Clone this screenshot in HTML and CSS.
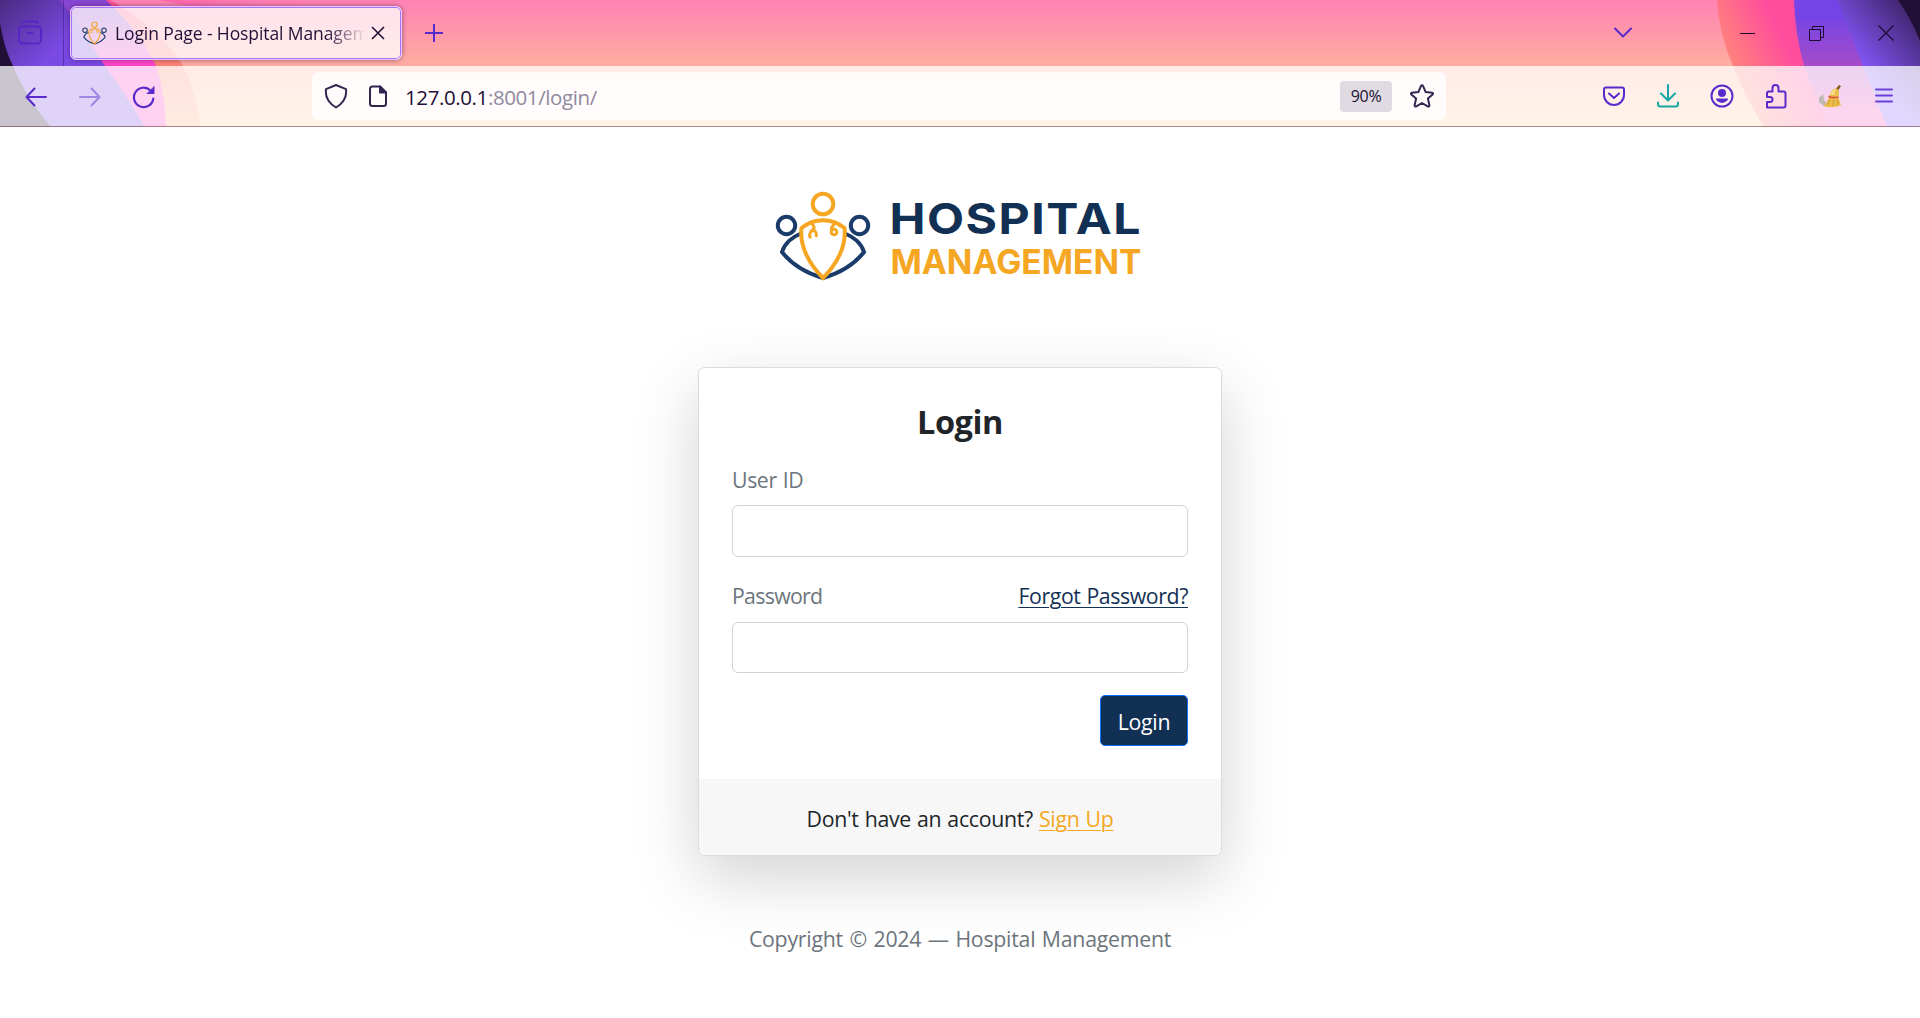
FILE: index.html
```html
<!DOCTYPE html>
<html lang="en">
<head>
<meta charset="utf-8">
<title>Login Page - Hospital Management</title>
<link rel="stylesheet" href="styles.css">
</head>
<body>
<svg width="0" height="0" class="defs" aria-hidden="true">
  <defs>
    <symbol id="mark" viewBox="0 0 96 90">
      <g fill="none" stroke-width="4">
        <g stroke="#1b3c6b">
          <circle cx="11.500" cy="34.500" r="8.700"/>
          <circle cx="84.500" cy="34.500" r="8.700"/>
          <path d="M26 42.500C17 46 9.500 53 7 61C17 74 31 82 48 87C65 82 79 74 89 61C86.500 53 79 46 70 42.500"/>
        </g>
        <g stroke="#f5a623">
          <circle cx="48" cy="13" r="10.300"/>
          <path d="M26.500 37C39 26.500 57 26.500 69.500 37C71.500 55 62 73 48 87C34 73 24.500 55 26.500 37Z"/>
          <g stroke-width="3">
            <path d="M36 31C38 34 41 37 37.500 39C34 42 33.500 46 36.500 46.500M38 39C41 40 42 43 41 46"/>
            <path d="M60 31C60 34 55 36 56.500 39"/>
            <circle cx="59" cy="41" r="2.800"/>
          </g>
        </g>
      </g>
    </symbol>
  </defs>
</svg>

<header class="browser">
  <svg class="theme" viewBox="0 0 1920 127" preserveAspectRatio="none" aria-hidden="true">
    <defs>
      <linearGradient id="peach" x1="0" y1="0" x2="0" y2="1"><stop offset="0" stop-color="#ff82b4"/><stop offset=".52" stop-color="#ffada0"/><stop offset="1" stop-color="#ffcf9c"/></linearGradient>
      <linearGradient id="lp" gradientUnits="userSpaceOnUse" x1="0" y1="0" x2="50" y2="55"><stop offset="0" stop-color="#4a2a80"/><stop offset="1" stop-color="#7b49e3"/></linearGradient>
      <linearGradient id="lm" gradientUnits="userSpaceOnUse" x1="0" y1="0" x2="0" y2="60"><stop offset="0" stop-color="#8546d2"/><stop offset=".3" stop-color="#9a48d0"/><stop offset="1" stop-color="#ff45c6"/></linearGradient>
      <linearGradient id="lo" gradientUnits="userSpaceOnUse" x1="110" y1="0" x2="320" y2="0"><stop offset="0" stop-color="#ff4aa3"/><stop offset="1" stop-color="#ff82b4" stop-opacity="0"/></linearGradient>
      <linearGradient id="lw" gradientUnits="userSpaceOnUse" x1="0" y1="0" x2="0" y2="126"><stop offset="0" stop-color="#ff4f94"/><stop offset=".5" stop-color="#ff8374"/><stop offset="1" stop-color="#ffae80"/></linearGradient>
      <linearGradient id="ro" gradientUnits="userSpaceOnUse" x1="1715" y1="50" x2="1775" y2="20"><stop offset="0" stop-color="#ff8a76"/><stop offset="1" stop-color="#ff4d9e"/></linearGradient>
      <linearGradient id="rp" gradientUnits="userSpaceOnUse" x1="0" y1="15" x2="0" y2="110"><stop offset="0" stop-color="#7544e6"/><stop offset=".5" stop-color="#a34acb"/><stop offset="1" stop-color="#f04fb8"/></linearGradient>
      <linearGradient id="rv" gradientUnits="userSpaceOnUse" x1="1862" y1="65" x2="1915" y2="20"><stop offset="0" stop-color="#8255f6"/><stop offset="1" stop-color="#432772"/></linearGradient>
    </defs>
    <rect width="1920" height="127" fill="url(#peach)"/>
    <path d="M100 0H330V6H190L160 0Z" fill="url(#lo)"/>
    <path d="M60 0H110C145 20 165 38 183 66Q196 92 201 127H60Z" fill="url(#lw)"/>
    <path d="M60 0H106Q142 34 156 66Q165 92 166 127H60Z" fill="url(#lm)"/>
    <path d="M0 0H60Q82 30 105 66Q126 94 145 127H0Z" fill="url(#lp)"/>
    <path d="M0 23Q4 48 13 66Q27 100 51 127H0Z" fill="#211036"/>
    <path d="M1717 0Q1719 34 1733 66Q1746 99 1764 127H1920V0Z" fill="url(#ro)"/>
    <path d="M1794 0Q1795 34 1804 66Q1815 98 1830 127H1920V0Z" fill="url(#rp)"/>
    <path d="M1838 0Q1850 34 1863 66Q1876 98 1887 127H1920V0Z" fill="url(#rv)"/>
    <path d="M1898 0Q1911 18 1920 41V0Z" fill="#211036"/>
  </svg>

  <div class="tabs">
    <div class="recent">
      <svg width="26" height="26" viewBox="0 0 26 26" fill="none" stroke="#5726c6" stroke-width="2" stroke-linecap="round"><path d="M5 2.500Q6 1.500 8 1.500H18Q20 1.500 21 2.500M10.500 13H15.500"/><rect x="2" y="6.500" width="22" height="17" rx="3.500"/></svg>
    </div>
    <div class="tab">
      <svg class="favicon" viewBox="0 0 96 90"><use href="#mark"/></svg>
      <span class="tab-title">Login Page - Hospital Management</span>
      <svg class="tab-close" width="14" height="14" viewBox="0 0 14 14" stroke="#211036" stroke-width="1.600"><path d="M1 1L13 13M13 1L1 13"/></svg>
    </div>
    <svg class="new-tab" width="18" height="18" viewBox="0 0 18 18" stroke="#5a2bcc" stroke-width="2"><path d="M9 0V18M0 9H18"/></svg>
    <div class="window">
      <svg width="18" height="12" viewBox="0 0 18 12" fill="none" stroke="#5a2bcc" stroke-width="2" stroke-linecap="round" stroke-linejoin="round"><path d="M1 1.500L9 9.500L17 1.500"/></svg>
      <svg width="15" height="15" viewBox="0 0 15 15" stroke="#1b0d30"><path d="M0 7.500H15"/></svg>
      <svg width="15" height="15" viewBox="0 0 15 15" fill="none" stroke="#1b0d30"><path d="M.5 3.500H11.500V14.500H.5ZM3.500 3.500V.5H14.500V11.500H11.500"/></svg>
      <svg width="16" height="16" viewBox="0 0 16 16" stroke="#1b0d30" stroke-width="1.200"><path d="M.5.5L15.500 15.500M15.500.5L.5 15.500"/></svg>
    </div>
  </div>

  <div class="toolbar">
    <div class="nav">
      <svg width="22" height="20" viewBox="0 0 22 20" fill="none" stroke="#5a2bcc" stroke-width="2" stroke-linecap="round" stroke-linejoin="round"><path d="M21 10H1.500M9.500 1.500L1.500 10L9.500 18.500"/></svg>
      <svg class="off" width="22" height="20" viewBox="0 0 22 20" fill="none" stroke="#5a2bcc" stroke-width="2" stroke-linecap="round" stroke-linejoin="round"><path d="M1 10H20.500M12.500 1.500L20.500 10L12.500 18.500"/></svg>
      <svg width="24" height="24" viewBox="0 0 24 24" fill="none" stroke="#5a2bcc" stroke-width="2.200" stroke-linecap="round"><path d="M21.300 13.500A9.700 9.700 0 1 1 18.500 5.500"/><path d="M22 2V8.500H15.500Z" fill="#5a2bcc" stroke-width="1"/></svg>
    </div>
    <div class="url">
      <svg width="24" height="26" viewBox="0 0 24 26" fill="none" stroke="#332550" stroke-width="2" stroke-linejoin="round"><path d="M12 2L22 6.200Q23.500 17.500 12 24.500Q.5 17.500 2 6.200Z"/></svg>
      <svg class="doc" width="20" height="24" viewBox="0 0 20 24" fill="none" stroke="#332550" stroke-width="2" stroke-linejoin="round"><path d="M12 2.500H4.500Q2 2.500 2 5V19.500Q2 22 4.500 22H15.500Q18 22 18 19.500V8.500Z"/><path d="M12 2.500V8.500H18Z" fill="#332550"/></svg>
      <span class="address">127.0.0.1<span class="path">:8001/login/</span></span>
      <span class="zoom">90%</span>
      <svg class="star" width="26" height="26" viewBox="0 0 26 26" fill="none" stroke="#332550" stroke-width="2" stroke-linejoin="round"><path d="M13 2.300Q13.700 2.300 14.100 3.200L16.700 9.100L23 9.700Q24.800 10.200 23.600 11.500L18.900 15.600L20.400 22.200Q20.300 24 18.700 23.400L13 20L7.300 23.400Q5.700 24 5.600 22.200L7.100 15.600L2.400 11.500Q1.200 10.200 3 9.700L9.300 9.100L11.900 3.200Q12.300 2.300 13 2.300Z"/></svg>
    </div>
    <div class="actions">
      <svg width="24" height="22" viewBox="0 0 24 22" fill="none" stroke="#5a2bcc" stroke-width="2" stroke-linecap="round" stroke-linejoin="round"><path d="M4 2.500H20Q22 2.500 22 4.500V10A10 10 0 0 1 2 10V4.500Q2 2.500 4 2.500ZM7 8.500L12 13L17 8.500"/></svg>
      <svg width="24" height="24" viewBox="0 0 24 24" fill="none" stroke="#17a5a5" stroke-width="2" stroke-linecap="round" stroke-linejoin="round"><path d="M12 1V16M5 9.500L12 16.500L19 9.500M2 18.500V20Q2 22.500 4.500 22.500H19.500Q22 22.500 22 20V18.500"/></svg>
      <svg width="24" height="24" viewBox="0 0 24 24"><circle cx="12" cy="12" r="10.500" fill="none" stroke="#5a2bcc" stroke-width="2"/><circle cx="12" cy="9" r="4" fill="#5a2bcc"/><path d="M6 14.500H18Q18.500 16 16 17.600Q14 19 12 19Q10 19 8 17.600Q5.500 16 6 14.500Z" fill="#5a2bcc"/></svg>
      <svg width="24" height="26" viewBox="0 0 24 26" fill="none" stroke="#5a2bcc" stroke-width="2" stroke-linejoin="round"><path d="M3 10.500Q3 8.500 5 8.500H8.500V5Q8.500 2 11.500 2Q14.500 2 14.500 5V8.500H19.500Q21.500 8.500 21.500 10.500V22.500Q21.500 24.500 19.500 24.500H3V19H6Q8.500 19 8.500 16.500Q8.500 14 6 14H3Z"/></svg>
      <svg width="24" height="24" viewBox="0 0 24 24"><path d="M1 14L5 10L6 16L10 21L6 22L1 18Z" fill="#bdb9b2"/><path d="M17 6L21 1L23 2L20 7Z" fill="#8a5f22"/><path d="M13 8Q15 4 18 4.500Q21 5 21 9L20.500 14L23 21Q15 25 5.500 22Q10 18 11 12Z" fill="#e9be4b"/><path d="M14 7Q16 4.500 18 5L16 11L12.500 11Z" fill="#f6dc8a"/><path d="M10.500 12.500Q15 14.500 20.500 13" stroke="#e0523f" stroke-width="1.800" fill="none"/><path d="M12 15.500L9 21.500M16 16L15 22M19.500 15.500L20 21" stroke="#c98f2b" stroke-width=".8" fill="none"/></svg>
      <svg class="menu" width="20" height="18" viewBox="0 0 20 18" stroke="#6d40d6" stroke-width="2" stroke-linecap="round"><path d="M2 2.500H18M2 8.500H18M2 14.500H18"/></svg>
    </div>
  </div>
</header>

<main class="page">
  <svg class="logo" width="370" height="92" viewBox="0 0 370 92" role="img" aria-label="Hospital Management">
    <use href="#mark" x="0" y="0" width="96" height="90"/>
    <text class="logo-top" transform="translate(114.500 42.500) scale(1.120 1)" textLength="224" lengthAdjust="spacing">HOSPITAL</text>
    <text class="logo-bottom" x="115.500" y="82.500" textLength="251" lengthAdjust="spacingAndGlyphs">MANAGEMENT</text>
  </svg>

  <section class="card">
    <form class="card-body">
      <h1 class="title">Login</h1>
      <label class="label" for="user"><span class="user-text">User ID</span></label>
      <input class="field" id="user" type="text">
      <div class="row">
        <label class="label tight" for="password">Password</label>
        <a class="forgot" href="#">Forgot Password?</a>
      </div>
      <input class="field short" id="password" type="password">
      <button class="submit" type="button">Login</button>
    </form>
    <div class="card-footer"><span>Don't have an account? <a class="signup" href="#">Sign Up</a></span></div>
  </section>

  <footer class="copyright">Copyright © 2024 — Hospital Management</footer>
</main>
</body>
</html>
```
FILE: styles.css
```css
* { box-sizing: border-box; }
body {
  margin: 0;
  height: 1018px;
  overflow: hidden;
  background: #fff;
  color: #212529;
  font-family: "Open Sans", "Noto Sans", sans-serif;
  font-size: 21.3px;
  letter-spacing: -0.3px;
  word-spacing: 0.8px;
}
svg { display: block; flex: none; }
.defs { position: absolute; }

/* Browser chrome */
.browser { position: relative; height: 127px; word-spacing: 0; }
.theme { position: absolute; inset: 0; width: 100%; height: 100%; }
.tabs { position: relative; display: flex; align-items: center; height: 66px; }
.recent {
  display: flex; align-items: center; justify-content: center;
  width: 64px; height: 66px; padding-right: 3px;
  border-right: 1px solid rgba(60, 20, 130, .5);
}
.tab {
  display: flex; align-items: center;
  width: 332px; height: 54px; margin-left: 6px; padding: 0 16px 0 11px;
  background: rgba(255, 255, 255, .76);
  border: 1px solid #e3cdf8; border-radius: 6px;
  box-shadow: 0 0 5px rgba(40, 10, 70, .5), inset 0 0 0 1px #ac70ff;
}
.favicon { width: 25px; height: 24px; }
.tab-title {
  width: 253px; margin: 0 5px 0 8px;
  overflow: hidden; white-space: nowrap;
  font-size: 17.5px; letter-spacing: -0.1px; color: #211036;
  -webkit-mask-image: linear-gradient(90deg, #000 84%, transparent);
  mask-image: linear-gradient(90deg, #000 84%, transparent);
}
.new-tab { margin-left: 23px; }
.window { display: flex; align-items: center; margin-left: auto; padding-right: 26px; }
.window svg + svg { margin-left: 54px; }
.window svg:nth-child(2) { margin-left: 108px; }

.toolbar {
  position: relative; display: flex; align-items: center;
  height: 61px; padding-right: 26px;
  background: rgba(255, 255, 255, .76);
  border-bottom: 1px solid rgba(95, 25, 40, .5);
}
.nav { display: flex; align-items: center; gap: 32px; width: 312px; padding: 1px 0 0 25px; }
.nav svg:last-child { margin-left: -1px; }
.off { opacity: .45; }
.url {
  display: flex; align-items: center;
  width: 1134px; height: 48px; padding: 0 11px 0 12px;
  background: rgba(255, 255, 255, .8); border-radius: 6px;
}
.doc { margin-left: 20px; }
.address { margin: 2px auto 0 17px; font-size: 20.5px; letter-spacing: -0.4px; color: #211036; }
.path { color: #91889f; }
.zoom {
  display: flex; align-items: center; justify-content: center;
  width: 52px; height: 31px; margin-right: 17px;
  background: #e0dbe2; border-radius: 4px;
  font-size: 16px; letter-spacing: -0.3px; color: #211036;
}
.actions { display: flex; align-items: center; gap: 30px; margin-left: auto; }
.menu { margin-left: 2px; }

/* Page */
.page { display: flex; flex-direction: column; align-items: center; }
.logo { margin: 64px 1px 0 0; }
.logo text { font-family: Inter, "Liberation Sans", sans-serif; letter-spacing: 0; word-spacing: 0; }
.logo-top { font-size: 43px; font-weight: 650; fill: #123054; }
.logo-bottom { font-size: 33.5px; font-weight: 700; fill: #f5a623; }
.card {
  width: 524px; height: 489px; margin-top: 84px;
  background: #fff; border: 1px solid #dcdddf; border-radius: 7px;
  box-shadow: 0 22px 65px rgba(0, 0, 0, .175);
  overflow: hidden;
}
.card-body { display: flex; flex-direction: column; height: 411px; padding: 31px 33px 0; }
.title { margin: 0 0 15px; text-align: center; font-size: 32.5px; line-height: 45px; font-weight: 700; letter-spacing: -0.4px; }
.label { color: #6c757d; line-height: 32px; }
.tight { letter-spacing: -0.7px; }
.user-text { display: inline-block; padding-top: 5px; line-height: 32px; letter-spacing: -0.4px; }
.field {
  width: 456px; height: 52px; margin: 9px 0 0;
  background: #fff; border: 1px solid #ced4da; border-radius: 6px; font: inherit;
}
.short { height: 51px; margin-top: 10px; }
.row { display: flex; justify-content: space-between; line-height: 32px; margin-top: 23px; }
.forgot { color: #123054; letter-spacing: -0.4px; text-decoration-thickness: 1px; text-underline-offset: 3px; }
.submit {
  align-self: flex-end; width: 88px; height: 51px; margin-top: 22px; padding: 2px 0 0;
  background: #123054; border: 1px solid #0d6efd; border-radius: 5px;
  color: #fff; font: inherit; letter-spacing: inherit;
}
.card-footer {
  display: flex; align-items: center; justify-content: center;
  height: 76px; padding-top: 2px; background: #f7f7f7;
}
.signup { color: #f5a623; text-decoration-thickness: 1px; text-underline-offset: 3px; }
.copyright { margin-top: 68px; line-height: 30px; color: #6c757d; letter-spacing: -0.25px; word-spacing: 1.3px; }
```
